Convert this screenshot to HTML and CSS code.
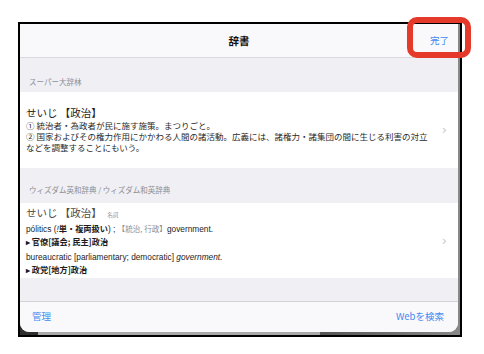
FILE: index.html
```html
<!DOCTYPE html>
<html lang="ja">
<head>
    <meta charset="UTF-8">
    <title>辞書</title>
    <link rel="stylesheet" href="styles.css">
</head>
<body>

    <div class="frame">
        <div class="sheet">
            <!-- Top bar -->
            <div class="navbar">
                <span class="nav-title">辞書</span>
                <span class="nav-done">完了</span>
            </div>

            <!-- スーパー大辞林 -->
            <div class="section-label tall">スーパー大辞林</div>
            <div class="entry first">
                <div class="entry-body">
                    <p class="headword">せいじ 【政治】</p>
                    <p class="line">① 統治者・為政者が民に施す施策。まつりごと。</p>
                    <p class="line">② 国家およびその権力作用にかかわる人間の諸活動。広義には、諸権力・諸集団の間に生じる利害の対立</p>
                    <p class="line">などを調整することにもいう。</p>
                </div>
                <span class="chevron">›</span>
            </div>

            <!-- ウィズダム -->
            <div class="section-label">ウィズダム英和辞典 / ウィズダム和英辞典</div>
            <div class="entry second">
                <div class="entry-body">
                    <p class="headword light">せいじ 【政治】 <span class="pos">名詞</span></p>
                    <p class="en">pólitics (<i>!</i><b>単・複両扱い</b>) ; <span class="muted">【統治, 行政】</span>government.</p>
                    <p class="en"><b>▸ 官僚[議会; 民主]政治</b></p>
                    <p class="en gap">bureaucratic [parliamentary; democratic] <i>government.</i></p>
                    <p class="en"><b>▸ 政党[地方]政治</b></p>
                </div>
                <span class="chevron">›</span>
            </div>

            <div class="spacer"></div>

            <!-- Bottom bar -->
            <div class="toolbar">
                <span class="link">管理</span>
                <span class="link">Webを検索</span>
            </div>
        </div>
    </div>

    <!-- highlight box around 完了 -->
    <div class="highlight"></div>

</body>
</html>
```

FILE: styles.css
```css
/* Reset */
* {
    margin: 0;
    padding: 0;
    box-sizing: border-box;
}

body {
    font-family: "Noto Sans CJK JP", "Liberation Sans", sans-serif;
    background: #ffffff;
    color: #1c1c1e;
    width: 484px;
    height: 354px;
    padding: 22px 0 0 18px;
    position: relative;
}

/* Screenshot frame */
.frame {
    width: 444px;
    height: 315px;
    border: 2px solid #000;
    background: linear-gradient(to right, #2e2e2e 0, #2e2e2e 18px, #a9a9a9 18px, #a9a9a9 300px, #555 300px, #888 440px);
    padding-right: 2px;
    padding-bottom: 3px;
    display: flex;
}

/* Modal sheet */
.sheet {
    flex: 1;
    display: flex;
    flex-direction: column;
    background: #efeff4;
    border-radius: 0 0 9px 9px;
    overflow: hidden;
}

.navbar {
    height: 34px;
    flex-shrink: 0;
    background: #f9f9fb;
    border-bottom: 1px solid #d9d9de;
    display: flex;
    align-items: center;
    justify-content: center;
    position: relative;
}

.nav-title {
    font-size: 10.5px;
    font-weight: bold;
    color: #111;
}

.nav-done {
    position: absolute;
    right: 9px;
    top: 9px;
    font-size: 9.5px;
    color: #3d8bf2;
}

/* Section labels */
.section-label {
    height: 35px;
    flex-shrink: 0;
    display: flex;
    align-items: flex-end;
    padding: 0 0 8px 9px;
    font-size: 7.5px;
    line-height: 10px;
    color: #8e8e93;
}

.section-label.tall {
    height: 34px;
    padding-bottom: 5px;
}

/* Entries */
.entry {
    background: #ffffff;
    display: flex;
    align-items: center;
    padding: 0 11px 0 6px;
}

.entry.first {
    height: 76px;
    padding-bottom: 1px;
}

.entry.second {
    height: 75px;
}

.entry-body {
    flex: 1;
}

.headword {
    font-size: 10.5px;
    line-height: 12px;
    margin-bottom: 1px;
    color: #1c1c1e;
}

.headword.light {
    color: #4a4a4a;
    line-height: 13px;
    margin-bottom: 0;
}

.pos {
    font-size: 5.5px;
    color: #8e8e93;
    margin-left: 3px;
}

.line {
    font-size: 8.5px;
    line-height: 11px;
    color: #2a2a2a;
}

.en {
    font-family: "Liberation Sans", "Noto Sans CJK JP", sans-serif;
    font-size: 8.3px;
    line-height: 12px;
    color: #1c1c1e;
}

.en b {
    font-family: "Noto Sans CJK JP", sans-serif;
    font-weight: bold;
    font-size: 8.2px;
}

.en.gap {
    margin-top: 3px;
}

.muted {
    font-family: "Noto Sans CJK JP", sans-serif;
    color: #8e8e93;
    font-size: 7.6px;
}

.chevron {
    font-family: "DejaVu Sans", sans-serif;
    font-size: 13px;
    color: #c7c7cc;
    margin-left: 8px;
}

.spacer {
    flex: 1;
}

/* Bottom toolbar */
.toolbar {
    height: 31px;
    flex-shrink: 0;
    background: #f9f9fb;
    border-top: 1px solid #d2d2d7;
    display: flex;
    align-items: center;
    justify-content: space-between;
    padding: 0 14px 2px 12px;
}

.link {
    font-size: 9.5px;
    color: #3d8bf2;
}

/* Red annotation box */
.highlight {
    position: absolute;
    left: 407px;
    top: 17px;
    width: 64px;
    height: 41px;
    border: 6px solid #e5392a;
    border-radius: 10px;
}
```
